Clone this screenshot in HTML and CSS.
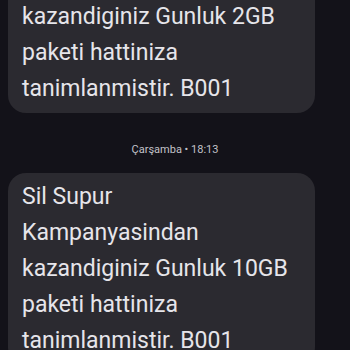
FILE: index.html
```html
<!DOCTYPE html>
<html lang="tr">
<head>
    <meta charset="UTF-8">
    <meta name="viewport" content="width=device-width, initial-scale=1.0">
    <title>Mesajlar</title>
    <link rel="stylesheet" href="styles.css">
</head>
<body>

    <div class="thread">
        <div class="bubble first">
            Sil Supur<br>
            Kampanyasindan<br>
            kazandiginiz Gunluk 2GB<br>
            paketi hattiniza<br>
            tanimlanmistir. B001
        </div>

        <div class="stamp">Çarşamba • 18:13</div>

        <div class="bubble">
            Sil Supur<br>
            Kampanyasindan<br>
            kazandiginiz Gunluk 10GB<br>
            paketi hattiniza<br>
            tanimlanmistir. B001
        </div>
    </div>

</body>
</html>
```

FILE: styles.css
```css
/* General Styles */
body {
  margin: 0;
  padding: 0;
  background-color: #131219;
  font-family: 'Roboto', 'Noto Sans', sans-serif;
  color: #e6e5ea;
  height: 350px;
  overflow: hidden;
}

/* Message list */
.thread {
    display: flex;
    flex-direction: column;
    align-items: flex-start;
    padding-left: 8px;
}

.bubble {
    width: 307px;
    box-sizing: border-box;
    background-color: #2b2a30;
    border-radius: 18px;
    padding: 6px 14px;
    font-size: 23px;
    line-height: 36px;
}

.bubble.first {
    margin-top: -79px; /* top of the earlier message is scrolled away */
}

.stamp {
    align-self: center;
    margin: 29px 0 15px -8px;
    font-size: 11px;
    line-height: 16px;
    color: #c3c2c9;
}
```
